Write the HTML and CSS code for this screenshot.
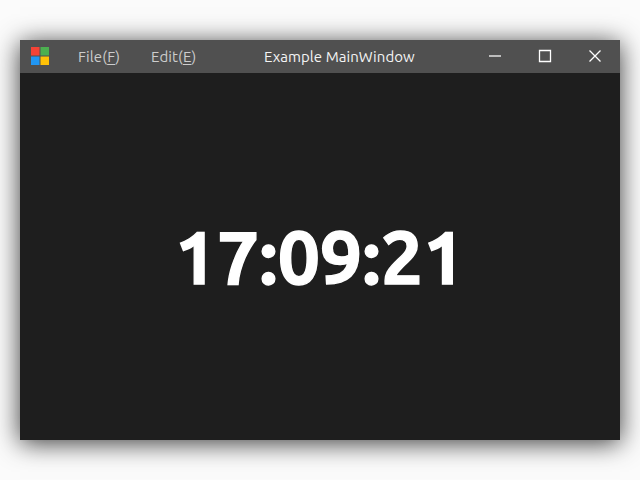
FILE: index.html
```html
<!DOCTYPE html>
<html lang="en">
<head>
<meta charset="utf-8">
<title>Example MainWindow</title>
<link rel="stylesheet" href="styles.css">
</head>
<body>
<main class="window">
  <header class="titlebar">
    <svg class="logo" viewBox="0 0 18 18"><path fill="#f44336" d="M0 0h8.500v8.500H0z"/><path fill="#4caf50" d="M9.500 0H18v8.500H9.500z"/><path fill="#2196f3" d="M0 9.500h8.500V18H0z"/><path fill="#ffc107" d="M9.500 9.500H18V18H9.500z"/></svg>
    <nav class="menu">
      <span class="menu-item">File(<u>F</u>)</span>
      <span class="menu-item">Edit(<u>E</u>)</span>
    </nav>
    <h1 class="title">Example MainWindow</h1>
    <div class="controls">
      <svg viewBox="0 0 50 32"><path class="minimize" d="M19 16h12"/></svg>
      <svg viewBox="0 0 50 32"><path d="M19.500 10.500h11v11h-11z"/></svg>
      <svg viewBox="0 0 50 32"><path d="M19.500 10.500l11 11M30.500 10.500l-11 11"/></svg>
    </div>
  </header>
  <section class="content"><time class="clock">17:09:21</time></section>
</main>
</body>
</html>
```
FILE: styles.css
```css
* { box-sizing: border-box; }
body { margin: 0; height: 480px; padding: 40px 20px; background: #fbfbfb; overflow: hidden; font-family: Ubuntu, "Noto Sans", sans-serif; }
.window { height: 400px; display: flex; flex-direction: column; background: #1e1e1e; box-shadow: 0 3px 24px rgba(0,0,0,.78); }
.titlebar { height: 33px; flex: none; display: flex; background: #505050; color: #f4f4f4; font-size: 15px; line-height: 34px; letter-spacing: .06px; }
.logo { width: 18px; height: 18px; margin: 7px 0 0 11px; }
.menu { display: flex; color: #cdcdcd; margin-left: 29px; letter-spacing: .13px; }
.menu-item { width: 73px; white-space: nowrap; }
.menu-item u { text-decoration-thickness: 1px; text-underline-offset: 2px; }
.title { margin: 0 0 0 40px; width: 166px; font-size: 15px; font-weight: 400; white-space: nowrap; }
.controls { display: flex; margin-left: auto; }
.controls svg { width: 50px; height: 32px; fill: none; stroke: #fff; stroke-width: 1.3; }
.controls .minimize { stroke: #bdbdbd; stroke-width: 2; }
.content { flex: 1; display: flex; align-items: center; justify-content: center; }
.clock { font-size: 75px; font-weight: 700; color: #fff; line-height: 1; -webkit-text-stroke: 1.3px #fff; }
```
